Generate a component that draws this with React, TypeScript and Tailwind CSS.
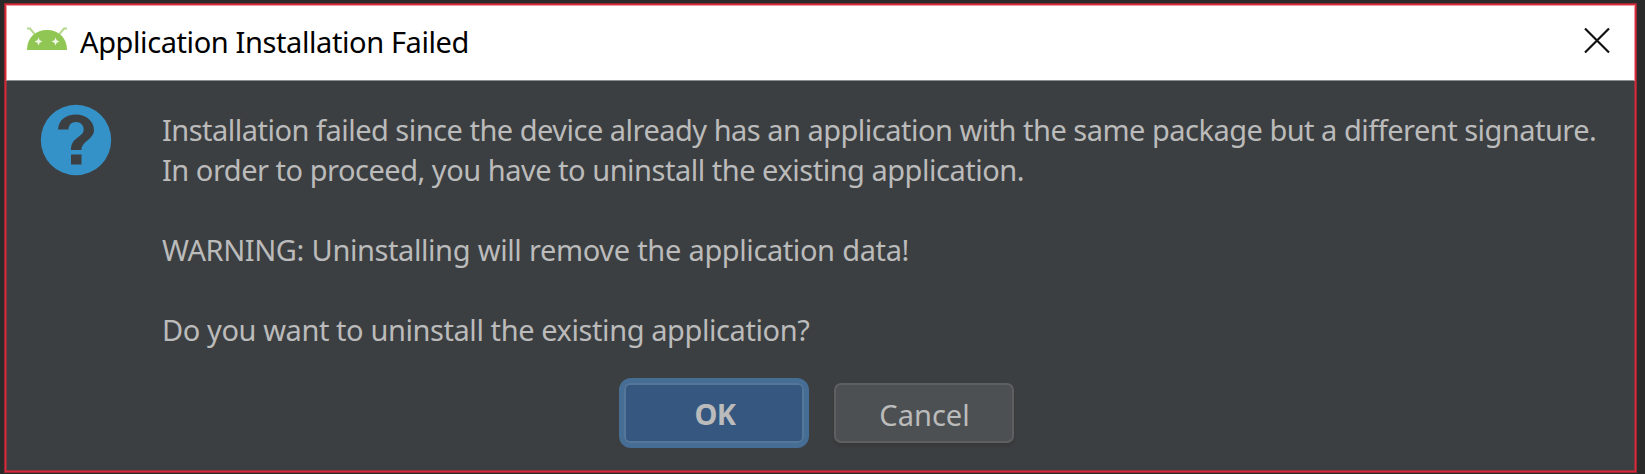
const lines = [
  { text: "Installation failed since the device already has an application with the same package but a different signature.", cls: "tracking-[-0.508px]" },
  { text: "In order to proceed, you have to uninstall the existing application.", cls: "tracking-[-0.485px]" },
  { text: "", cls: "" },
  { text: "WARNING: Uninstalling will remove the application data!", cls: "tracking-[-0.41px] [word-spacing:0.6px]" },
  { text: "", cls: "" },
  { text: "Do you want to uninstall the existing application?", cls: "tracking-[-0.415px]" },
];

function AndroidIcon() {
  return (
    <svg width="42" height="24" viewBox="0 0 42 24" className="block shrink-0">
      <path d="M1 1.500H4L8.500 7M41 1.500H38L33.500 7" stroke="#b5d98e" strokeWidth="2" fill="none" />
      <path d="M1 23C1 11 9 3 21 3s20 8 20 20z" fill="#90c653" />
      <path d="M12.500 10.500l1.200 2.800L16.500 14.500l-2.800 1.200L12.500 18.500l-1.200-2.800L8.500 14.500l2.800-1.200zM29.500 10.500l1.200 2.800 2.800 1.200-2.800 1.200-1.200 2.800-1.200-2.800-2.800-1.200 2.800-1.200z" fill="#eff8e6" />
    </svg>
  );
}

function QuestionIcon() {
  return (
    <svg width="72" height="72" viewBox="0 0 72 72" className="block shrink-0">
      <circle cx="36" cy="36" r="35.200" fill="#3592c8" />
      <path d="M18 25.500C18.500 16 26 10.500 36 10.500S54 17 54 26C54 35.500 41.500 37 41.500 46H31C31 32.500 43.700 33.500 43.700 25.500C43.700 21 40.500 18 36 18S28.500 21 28.500 25.500Z" fill="#3c3f41" />
      <rect x="31" y="50.500" width="10.500" height="10" fill="#3c3f41" />
    </svg>
  );
}

export default function App() {
  return (
    <div className="h-[474px] w-[1645px] overflow-hidden bg-[#2a2a2b] pt-[3px] pl-1 font-['Noto_Sans','Open_Sans',sans-serif]">
      <div className="h-[470px] w-[1633px] border border-[#982833]">
        <div className="flex h-full w-full flex-col border border-[#da2939] bg-[#3c3f41]">
          <header className="flex h-[76px] shrink-0 items-start border-x border-t border-b border-x-[#ef9ba3] border-t-[#ef9ba3] border-b-[#8b8e8f] bg-white">
            <div className="mt-[21px] ml-[19px]"><AndroidIcon /></div>
            <h1 className="mt-[16px] ml-[12px] text-[29px] leading-10 tracking-[-0.4px] whitespace-nowrap text-black">Application Installation Failed</h1>
            <button aria-label="Close" className="mt-[21px] mr-[23px] ml-auto">
              <svg width="28" height="28" viewBox="0 0 28 28" className="block">
                <path d="M2 1.500 26 25.500M26 1.500 2 25.500" stroke="#111" strokeWidth="2.200" fill="none" />
              </svg>
            </button>
          </header>
          <div className="flex grow flex-col border-x border-b border-[#8c333d]">
            <main className="flex h-[297px] shrink-0 items-start pt-[23px] pl-[33px]">
              <QuestionIcon />
              <div className="mt-[6px] ml-[50px] text-[29px] leading-10 text-[#bbbbbb]">
                {lines.map((l, i) => (
                  <p key={i} className="h-10 whitespace-nowrap"><span className={l.cls}>{l.text}</span></p>
                ))}
              </div>
            </main>
            <footer className="flex items-start pl-[612px]">
              <button className="flex h-[70px] w-[190px] items-center justify-center rounded-[12px] border-5 border-[#466d94] bg-[#365880]">
                <span className="flex h-full w-full items-center justify-center rounded-[6px] border-2 border-[#537699] pt-[2px] pl-[2px] text-[29px] font-bold tracking-[-0.5px] text-[#bbbbbb]">OK</span>
              </button>
              <button className="mt-[5px] ml-[25px] flex h-[60px] w-[180px] items-center justify-center rounded-[7px] border-2 border-[#5e6060] bg-[#4c5052] pt-[3px] pl-px text-[29px] text-[#bbbbbb] shadow-[0_3px_2px_#37393a]">Cancel</button>
            </footer>
          </div>
        </div>
      </div>
    </div>
  );
}
